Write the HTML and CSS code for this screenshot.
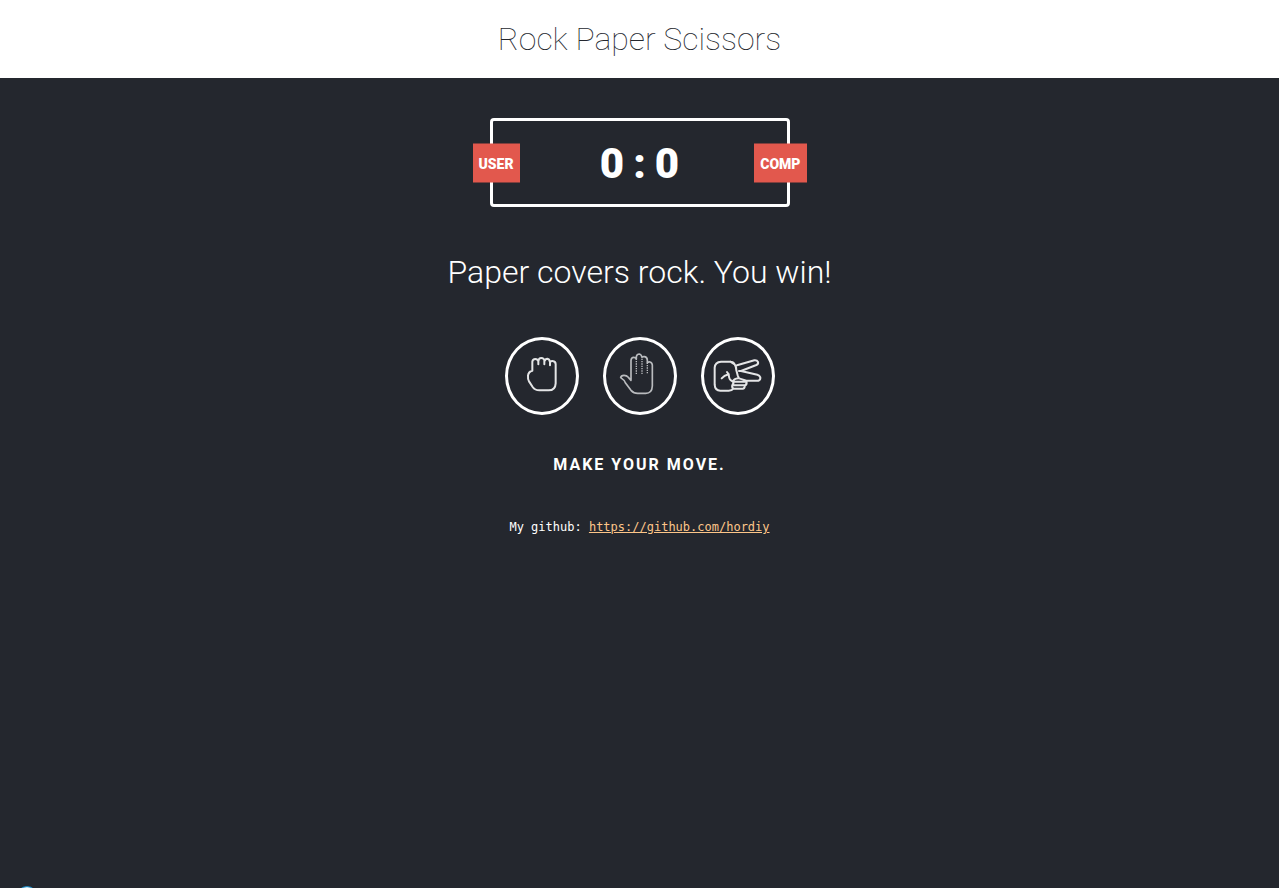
FILE: index.html
```
<!DOCTYPE html>
<html lang="en">
<head>
<meta charset="utf-8">
<title>Rock Paper Scissors</title>
<link rel="stylesheet" href="styles.css">
</head>
<body>
<header class="header"><h1 class="title">Rock Paper Scissors</h1></header>
<main class="game">
  <div class="scoreboard">
    <div class="badge badge-user">USER</div>
    <div class="badge badge-comp">COMP</div>
    <span>0</span><span>:</span><span>0</span>
  </div>
  <p class="result">Paper covers rock. You win!</p>
  <div class="choices">
    <button class="choice" type="button" aria-label="Rock">
      <svg class="hand" viewBox="24 30 204 216"><path d="M97 122V95Q98 87 106 87Q113 87 115 94Q116 84 124 84Q132 84 134 93Q136 86 142 86Q149 87 150 97Q152 92 158 93Q167 94 167 103V160Q166 181 146 181H118Q105 181 98 171L87 154Q83 147 84 137Q85 125 97 122M115 93V103M133 93V103M150 96V106"/></svg>
    </button>
    <button class="choice" type="button" aria-label="Paper">
      <svg class="hand hand-thin" viewBox="24 30 204 216"><path d="M99 149V91Q100 82 107 82Q113 82 115 87V80Q117 72 124 72Q130 73 132 82Q134 79 140 80Q148 82 148 91V99Q150 95 156 96Q163 98 163 106V168Q162 190 143 190H119Q107 190 99 181L82 158Q80 151 68 143Q69 136 78 136Q86 136 91 142L99 151"/><path class="dots" d="M115 86V133M132 86V133M148 98V133"/></svg>
    </button>
    <button class="choice" type="button" aria-label="Scissors">
      <svg class="hand" viewBox="24 30 204 216"><path d="M116 103Q112 95 103 95H75Q57 96 56 113V164Q57 182 73 182H98Q108 182 112 176H140Q146 176 147 166Q154 164 151 152H187Q194 150 193 142Q191 136 184 134L135 123L181 105Q188 102 186 96Q183 90 175 91L123 106M103 95L116 103Q121 110 121 121L125 136L129 145L151 152M129 123H135M77 145Q84 137 98 133L93 126M98 132Q99 148 105 151L112 156M112 176Q106 171 110 163Q114 160 111 155Q113 146 127 145M113 155H149M111 166H147"/></svg>
    </button>
  </div>
  <p class="prompt">MAKE YOUR MOVE.</p>
  <p class="credit">My github: <a class="link" href="https://github.com/hordiy">https://github.com/hordiy</a></p>
</main>
<div class="orb"></div>
</body>
</html>
```
FILE: styles.css
```
* { box-sizing: border-box; margin: 0; padding: 0; }
body {
  min-height: 100vh;
  background: #24272e;
  color: #fff;
  font-family: Roboto, sans-serif;
  text-align: center;
}
.header { background: #fff; padding: 20px; color: #24272e; }
.title { font-size: 32px; font-weight: 100; line-height: 38px; }
.game { display: flex; flex-direction: column; align-items: center; }
.scoreboard {
  position: relative;
  display: flex;
  justify-content: center;
  gap: 9px;
  width: 300px;
  margin-top: 40px;
  padding: 18px 0 15px;
  border: 3px solid #fff;
  border-radius: 4px;
  font-size: 42px;
  font-weight: 900;
  line-height: 50px;
}
.badge {
  position: absolute;
  top: 50%;
  transform: translateY(-50%);
  padding: 11px 6px 10px;
  background: #e2584d;
  font-size: 14px;
  font-weight: 900;
  line-height: 18px;
}
.badge-user { left: -20px; }
.badge-comp { right: -20px; }
.result { margin-top: 45px; font-size: 32px; font-weight: 300; line-height: 40px; }
.choices { display: flex; gap: 24px; margin-top: 45px; }
.choice {
  width: 74px;
  height: 78px;
  border: 3px solid #fff;
  border-radius: 50%;
  background: transparent;
  cursor: pointer;
}
.hand {
  display: block;
  width: 68px;
  height: 72px;
  fill: none;
  stroke: #e4e5e6;
  stroke-width: 6;
  stroke-linecap: round;
  stroke-linejoin: round;
}
.hand-thin { stroke: #b9bbbe; stroke-width: 5; }
.dots { stroke-width: 4; stroke-linecap: butt; stroke-dasharray: 4 3; }
.prompt { margin-top: 40px; font-size: 16px; font-weight: 700; line-height: 20px; letter-spacing: 2px; }
.credit { margin-top: 43px; font: 12px/18px "DejaVu Sans Mono", monospace; }
.link { color: #fdc689; }
.orb {
  position: fixed;
  left: 16px;
  bottom: -20px;
  width: 22px;
  height: 22px;
  border: 1px solid #1683bd;
  border-radius: 50%;
  background: #cfe9f7;
}
```
